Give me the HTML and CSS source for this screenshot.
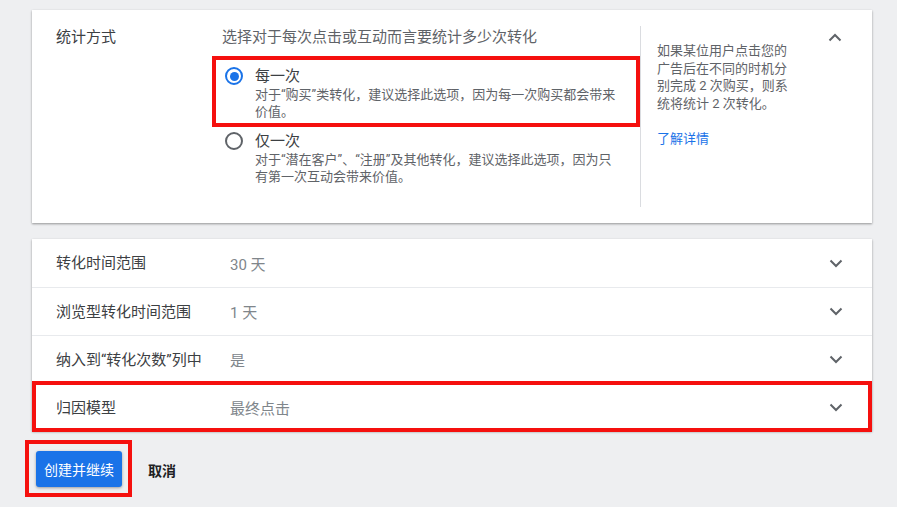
FILE: index.html
```html
<!DOCTYPE html>
<html lang="zh-CN">
<head>
    <meta charset="UTF-8">
    <title>转化操作设置</title>
    <link rel="stylesheet" href="styles.css">
</head>
<body>

    <div class="page">
        <!-- 统计方式 (expanded) -->
        <section class="card card-open">
            <div class="field-label">统计方式</div>
            <div class="options">
                <div class="options-title">选择对于每次点击或互动而言要统计多少次转化</div>
                <div class="option highlight">
                    <span class="radio checked"></span>
                    <div class="option-text">
                        <div class="option-name">每一次</div>
                        <div class="option-desc">对于“购买”类转化，建议选择此选项，因为每一次购买都会带来价值。</div>
                    </div>
                </div>
                <div class="option">
                    <span class="radio"></span>
                    <div class="option-text">
                        <div class="option-name">仅一次</div>
                        <div class="option-desc">对于“潜在客户”、“注册”及其他转化，建议选择此选项，因为只有第一次互动会带来价值。</div>
                    </div>
                </div>
            </div>
            <div class="side-help">
                <p>如果某位用户点击您的广告后在不同的时机分别完成 2 次购买，则系统将统计 2 次转化。</p>
                <a href="#">了解详情</a>
            </div>
            <div class="toggle">
                <svg width="14" height="9" viewBox="0 0 14 9"><path d="M1.5 7.5 L7 2 L12.5 7.5" fill="none" stroke="#5f6368" stroke-width="2"/></svg>
            </div>
        </section>

        <!-- collapsed settings -->
        <section class="card card-list">
            <div class="row">
                <div class="field-label">转化时间范围</div>
                <div class="field-value">30 天</div>
                <div class="toggle"><svg width="14" height="9" viewBox="0 0 14 9"><path d="M1.5 1.5 L7 7 L12.5 1.5" fill="none" stroke="#5f6368" stroke-width="2"/></svg></div>
            </div>
            <div class="row">
                <div class="field-label">浏览型转化时间范围</div>
                <div class="field-value">1 天</div>
                <div class="toggle"><svg width="14" height="9" viewBox="0 0 14 9"><path d="M1.5 1.5 L7 7 L12.5 1.5" fill="none" stroke="#5f6368" stroke-width="2"/></svg></div>
            </div>
            <div class="row">
                <div class="field-label">纳入到“转化次数”列中</div>
                <div class="field-value">是</div>
                <div class="toggle"><svg width="14" height="9" viewBox="0 0 14 9"><path d="M1.5 1.5 L7 7 L12.5 1.5" fill="none" stroke="#5f6368" stroke-width="2"/></svg></div>
            </div>
            <div class="row marked">
                <div class="field-label">归因模型</div>
                <div class="field-value">最终点击</div>
                <div class="toggle"><svg width="14" height="9" viewBox="0 0 14 9"><path d="M1.5 1.5 L7 7 L12.5 1.5" fill="none" stroke="#5f6368" stroke-width="2"/></svg></div>
            </div>
        </section>

        <div class="actions">
            <div class="btn-frame">
                <button class="btn-primary">创建并继续</button>
            </div>
            <button class="btn-text">取消</button>
        </div>
    </div>

</body>
</html>
```

FILE: styles.css
```css
body {
    margin: 0;
    background: #eeeff1;
    font-family: Roboto, "Noto Sans CJK SC", sans-serif;
    color: #202124;
}
.page {
    width: 840px;
    padding: 10px 0 0 32px;
}
.card {
    background: #fff;
    box-shadow: 0 1px 2px rgba(0, 0, 0, 0.3), 0 1px 3px rgba(0, 0, 0, 0.1);
}
.field-label {
    width: 166px;
    font-size: 15px;
    line-height: 22px;
    flex-shrink: 0;
    color: #3c4043;
}

/* expanded card */
.card-open {
    display: flex;
    padding: 16px 25px 16px 24px;
    min-height: 181px;
}
.options {
    width: 418px;
    border-right: 1px solid #dadce0;
}
.options-title {
    font-size: 15px;
    line-height: 22px;
    color: #5f6368;
}
.option {
    display: flex;
    gap: 12px;
    margin: 4px 0 0 -10px;
    padding: 0 0 0 13px;
}
.option.highlight {
    margin: 8px 0 0 -10px;
    padding: 6px 4px 3px 9px;
    border: 4px solid #f5100e;
}
.radio {
    width: 14px;
    height: 14px;
    margin-top: 1px;
    border: 2px solid #5f6368;
    border-radius: 50%;
    flex-shrink: 0;
    display: flex;
    align-items: center;
    justify-content: center;
}
.radio.checked {
    border-color: #1a73e8;
}
.radio.checked::after {
    content: "";
    width: 9px;
    height: 9px;
    border-radius: 50%;
    background: #1a73e8;
}
.option-name {
    font-size: 15px;
    line-height: 20px;
    color: #3c4043;
}
.option-desc {
    width: 366px;
    font-size: 13px;
    line-height: 17px;
    color: #5f6368;
}
.side-help {
    width: 136px;
    padding: 16px 0 0 16px;
    font-size: 13px;
    line-height: 17.5px;
    color: #5f6368;
}
.side-help p {
    margin: 0 0 18px;
}
.side-help a {
    color: #1a73e8;
    font-size: 13px;
    text-decoration: none;
}
.toggle {
    margin-left: auto;
    width: 24px;
    height: 22px;
    display: flex;
    align-items: center;
    justify-content: center;
}

/* collapsed rows */
.card-list {
    margin-top: 16px;
}
.row {
    display: flex;
    align-items: center;
    height: 47px;
    padding: 0 24px;
    border-top: 1px solid #e8eaed;
}
.row:first-child {
    border-top: none;
    height: 48px;
}
.row .field-label {
    width: 174px;
}
.field-value {
    font-size: 15px;
    color: #80868b;
}
.row.marked {
    position: relative;
}
.row.marked::after {
    content: "";
    position: absolute;
    left: 0;
    right: 0;
    top: -3px;
    bottom: -1px;
    border: 4px solid #f5100e;
}

/* footer buttons */
.actions {
    display: flex;
    align-items: center;
    gap: 16px;
    margin: 9px 0 0 -7px;
}
.btn-frame {
    border: 4px solid #f5100e;
    padding: 7px 6px 6px 7px;
}
.btn-primary {
    display: block;
    width: 86px;
    height: 36px;
    padding: 0;
    border: none;
    border-radius: 3px;
    background: #1a73e8;
    color: #fff;
    font-family: inherit;
    font-size: 14px;
    box-shadow: 0 1px 3px rgba(0, 0, 0, 0.35);
}
.btn-text {
    border: none;
    background: none;
    padding: 2px 0 0;
    font-family: inherit;
    font-size: 14px;
    font-weight: bold;
    color: #202124;
}
```
